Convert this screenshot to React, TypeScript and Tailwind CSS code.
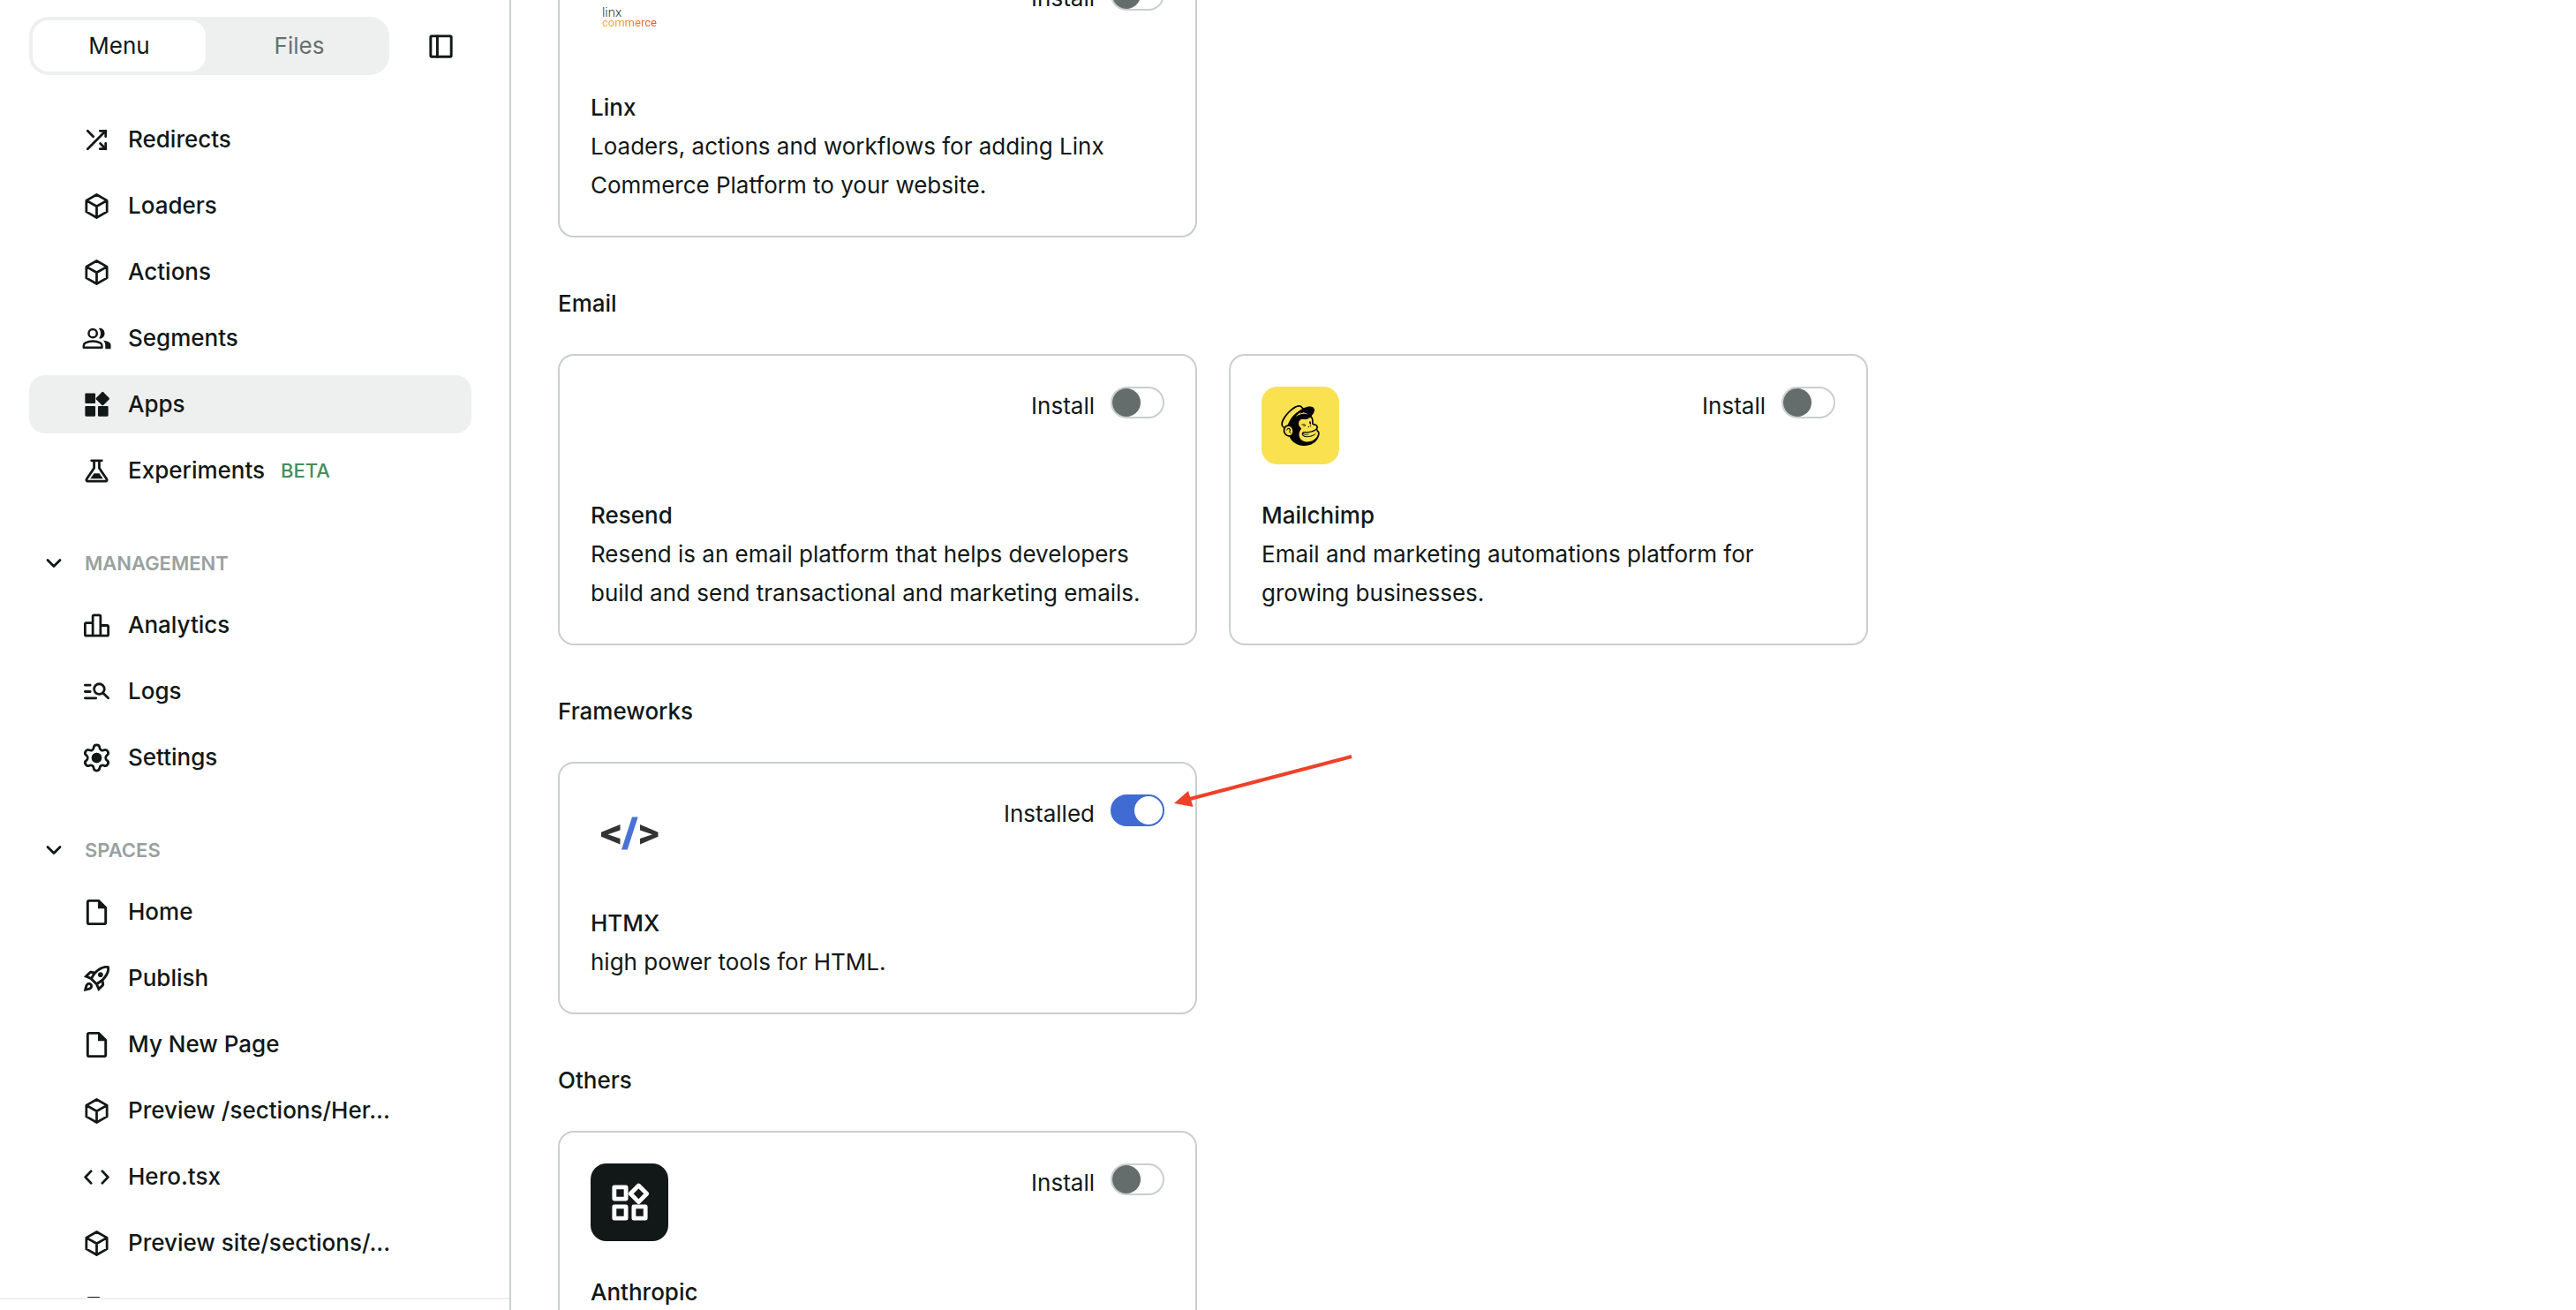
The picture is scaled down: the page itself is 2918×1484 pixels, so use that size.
import { useId, useState } from "react";
import type { ReactNode } from "react";
import { ChevronDown, Settings } from "lucide-react";
import { SiMailchimp } from "react-icons/si";
import { MdOutlineInsertDriveFile, MdOutlineRocketLaunch } from "react-icons/md";

function Icon({ children, className = "size-[35px]" }: { children: ReactNode; className?: string }) {
  return (
    <svg
      viewBox="0 0 24 24"
      fill="none"
      stroke="currentColor"
      strokeWidth="1.9"
      strokeLinecap="round"
      strokeLinejoin="round"
      className={`shrink-0 ${className}`}
      aria-hidden="true"
    >
      {children}
    </svg>
  );
}

const ShuffleIcon = () => (
  <Icon>
    <path d="M5 19 19 5M5 5l4.4 4.4M14.8 14.8 19 19" />
    <path d="M14.6 5H19v4.4M14.6 19H19v-4.4" strokeLinejoin="miter" />
    <path d="M16.5 4.6h2.9v2.9zM16.5 19.4h2.9v-2.9z" fill="currentColor" stroke="none" />
  </Icon>
);

const CubeIcon = () => (
  <Icon>
    <path d="m12 3.1 8 4.5v8.8l-8 4.5-8-4.5V7.6zM4 7.6l8 4.6 8-4.6M12 12.2v8.7" />
  </Icon>
);

const SegmentsIcon = () => (
  <Icon>
    <circle cx="9" cy="8" r="3.2" strokeWidth="1.7" />
    <path d="M1.9 19v-1.4c0-1 .5-1.8 1.4-2.3C5 14.4 6.9 14 9 14s4 .4 5.7 1.3c.9.5 1.4 1.3 1.4 2.3V19z" strokeWidth="1.7" />
    <path d="M13.6 11.9c1-1.1 1.5-2.4 1.5-3.9s-.5-2.8-1.5-3.9c2.6-.6 4.6 1.4 4.6 3.9s-2 4.5-4.6 3.9z" fill="currentColor" stroke="none" />
    <path d="M17 13.3c2.2.3 3.9.9 5 1.7.7.5 1 1.3 1 2.2V20h-4.3v-2.8c0-1.5-.5-2.8-1.7-3.9z" fill="currentColor" stroke="none" />
  </Icon>
);

const AppsIcon = () => (
  <Icon>
    <g fill="currentColor" stroke="none">
      <rect x="3" y="3" width="8" height="8" rx="0.7" />
      <rect x="3" y="13" width="8" height="8" rx="0.7" />
      <rect x="13" y="13" width="8" height="8" rx="0.7" />
      <path d="M16.1 2.2a.8.8 0 0 1 1.1 0l4.5 4.5a.8.8 0 0 1 0 1.1l-4.5 4.5a.8.8 0 0 1-1.1 0l-4.5-4.5a.8.8 0 0 1 0-1.1z" />
    </g>
  </Icon>
);

const FlaskIcon = () => (
  <Icon>
    <path d="M8 4h8M10 4v5.7L4.2 18.4a1 1 0 0 0 .8 1.6h14a1 1 0 0 0 .8-1.6L14 9.7V4" />
    <path d="M7 18h10l-3-4.2h-4z" fill="currentColor" stroke="none" />
  </Icon>
);

const ChartIcon = () => (
  <Icon>
    <path d="M9 20V5a1 1 0 0 1 1-1h4a1 1 0 0 1 1 1v15M9 10H4a1 1 0 0 0-1 1v8a1 1 0 0 0 1 1h16a1 1 0 0 0 1-1v-6a1 1 0 0 0-1-1h-5" />
  </Icon>
);

const LogsIcon = () => (
  <Icon>
    <path d="M3 7h4M3 12h4M3 17h8.5M16.7 12.9 21 17" />
    <circle cx="14" cy="10" r="4" />
  </Icon>
);

const SettingsIcon = () => (
  <Settings className="size-[35px] shrink-0" strokeWidth={1.9} aria-hidden="true">
    <circle cx="12" cy="12" r="3" fill="currentColor" />
  </Settings>
);

const FileIcon = () => <MdOutlineInsertDriveFile className="size-[35px] shrink-0" aria-hidden="true" />;
const RocketIcon = () => <MdOutlineRocketLaunch className="size-[35px] shrink-0" aria-hidden="true" />;

const CodeIcon = () => (
  <Icon>
    <path d="M7.7 7.3 3.2 12l4.5 4.7M16.3 7.3l4.5 4.7-4.5 4.7" />
  </Icon>
);

const PanelIcon = () => (
  <Icon>
    <rect x="4" y="4" width="16" height="16" rx="0.8" strokeWidth="2" />
    <path d="M9.2 4v16" strokeWidth="2" />
  </Icon>
);

type Item = { label?: string; icon: () => ReactNode; active?: boolean; beta?: boolean };

const siteItems: Item[] = [
  { label: "Redirects", icon: ShuffleIcon },
  { label: "Loaders", icon: CubeIcon },
  { label: "Actions", icon: CubeIcon },
  { label: "Segments", icon: SegmentsIcon },
  { label: "Apps", icon: AppsIcon, active: true },
  { label: "Experiments", icon: FlaskIcon, beta: true },
];

const managementItems: Item[] = [
  { label: "Analytics", icon: ChartIcon },
  { label: "Logs", icon: LogsIcon },
  { label: "Settings", icon: SettingsIcon },
];

const spaceItems: Item[] = [
  { label: "Home", icon: FileIcon },
  { label: "Publish", icon: RocketIcon },
  { label: "My New Page", icon: FileIcon },
  { label: "Preview /sections/Her...", icon: CubeIcon },
  { label: "Hero.tsx", icon: CodeIcon },
  { label: "Preview site/sections/...", icon: CubeIcon },
  { icon: FileIcon },
];

function NavList({ items }: { items: Item[] }) {
  return (
    <ul className="flex flex-col gap-[9px]">
      {items.map(({ label, icon: Glyph, active, beta }, index) => (
        <li key={index}>
          <a
            href="#"
            aria-label={label ? undefined : "Page"}
            aria-current={active ? "page" : undefined}
            className={`flex h-[66px] items-center gap-[18px] rounded-[18px] pl-[59px] font-medium ${
              active ? "bg-[#eef0ef]" : ""
            }`}
          >
            <Glyph />
            {label && <span className="whitespace-nowrap">{label}</span>}
            {beta && <span className="text-[22px] text-[#448f5b]">BETA</span>}
          </a>
        </li>
      ))}
    </ul>
  );
}

function NavGroup({ title, items }: { title: string; items: Item[] }) {
  return (
    <section className="mt-[50px]">
      <button type="button" className="mb-[15px] flex h-11 w-full items-center gap-[21px] pl-[14px]">
        <ChevronDown className="size-7 shrink-0" strokeWidth={2.4} aria-hidden="true" />
        <span className="text-[22px] font-semibold text-[#98a19f]">{title}</span>
      </button>
      <NavList items={items} />
    </section>
  );
}

function Sidebar() {
  return (
    <aside className="flex w-[579px] shrink-0 flex-col border-r-2 border-[#c9cfcf]">
      <div className="flex items-center px-[33px] pt-[19px]">
        <div className="flex h-[66px] w-[408px] gap-2 rounded-[22px] bg-[#eef0ef] p-1">
          <button type="button" className="flex-1 rounded-[18px] bg-white">
            Menu
          </button>
          <button type="button" className="flex-1 rounded-[18px] text-[#66706f]">
            Files
          </button>
        </div>
        <button type="button" aria-label="Toggle sidebar" className="ml-[41px]">
          <PanelIcon />
        </button>
      </div>
      <nav className="min-h-0 flex-1 overflow-hidden pt-10 pr-[43px] pl-[33px]">
        <NavList items={siteItems} />
        <NavGroup title="MANAGEMENT" items={managementItems} />
        <NavGroup title="SPACES" items={spaceItems} />
      </nav>
      <div className="h-[14px] shrink-0 border-t-2 border-[#eef0ef]" />
    </aside>
  );
}

function InstallToggle({ installed = false }: { installed?: boolean }) {
  const id = useId();
  const [on, setOn] = useState(installed);
  return (
    <div className="flex items-start gap-[18px]">
      <label htmlFor={id}>{on ? "Installed" : "Install"}</label>
      <input
        id={id}
        type="checkbox"
        checked={on}
        onChange={(e) => setOn(e.target.checked)}
        className="block h-9 w-[61px] appearance-none rounded-full border-2 border-[#c9cfcf] bg-white before:block before:size-8 before:rounded-full before:bg-[#646d6b] checked:border-[#406bd3] checked:bg-[#406bd3] checked:before:ml-[25px] checked:before:bg-white"
      />
    </div>
  );
}

type AppCardProps = {
  name: string;
  description?: string;
  logo?: ReactNode;
  installed?: boolean;
  children?: ReactNode;
};

function AppCard({ name, description, logo, installed, children }: AppCardProps) {
  return (
    <article className="relative rounded-[18px] border-2 border-[#c9cfcf] p-[35px]">
      <div className="flex items-start justify-between">
        <div className="flex size-[88px] items-center justify-center overflow-hidden rounded-[18px]">{logo}</div>
        <InstallToggle installed={installed} />
      </div>
      <h3 className="mt-9 font-medium">{name}</h3>
      {description && <p>{description}</p>}
      {children}
    </article>
  );
}

function Section({ title, children }: { title?: string; children: ReactNode }) {
  return (
    <section>
      {title && <h2 className="mb-[35px] font-medium">{title}</h2>}
      <div className="grid grid-cols-3 gap-9">{children}</div>
    </section>
  );
}

const LinxLogo = () => (
  <div className="w-[62px] font-['Roboto',sans-serif] leading-[11px]">
    <div className="text-[15px] font-light text-[#333]">linx</div>
    <div className="bg-linear-to-r from-[#f5b32a] to-[#ee4b2b] bg-clip-text text-[13px] text-transparent">commerce</div>
  </div>
);

const MailchimpLogo = () => (
  <div className="flex size-full items-center justify-center bg-[#fae150]">
    <SiMailchimp className="size-[46px] text-black" aria-hidden="true" />
  </div>
);

const HtmxLogo = () => (
  <svg viewBox="0 0 88 88" className="size-full" aria-hidden="true">
    <path d="M33.5 34v6.5L19.500 45.3l14 4.7v6.5L12 47.7v-5zM56 34v6.5l14 4.8L56 50v6.5l20.5-8.800v-5z" fill="#333" />
    <path d="M47 25.5h6.7l-12 37H35z" fill="#4a72d6" />
  </svg>
);

const WidgetsLogo = () => (
  <div className="flex size-full items-center justify-center bg-[#111817] text-white">
    <Icon className="size-[53px]">
      <g strokeWidth="2.2">
        <rect x="4" y="4" width="6" height="6" />
        <rect x="4" y="14" width="6" height="6" />
        <rect x="14" y="14" width="6" height="6" />
        <path d="m16.5 3.2 4.2 4.2-4.2 4.2-4.2-4.2z" />
      </g>
    </Icon>
  </div>
);

const Arrow = () => (
  <svg
    viewBox="0 0 206 64"
    className="pointer-events-none absolute -top-[11px] left-full -ml-[26px] h-16 w-[206px]"
    aria-hidden="true"
  >
    <path d="M20 51 203 3" stroke="#ee4128" strokeWidth="4" />
    <path d="M2 56 18 42l5.5 18z" fill="#ee4128" />
  </svg>
);

export default function App() {
  return (
    <div className="flex h-screen overflow-hidden bg-white font-['Inter',sans-serif] text-[26px] leading-[44px] text-[#111817]">
      <Sidebar />
      <main className="min-w-0 flex-1 overflow-hidden pr-[42px] pl-[53px]">
        <div className="-mt-[61px] flex flex-col gap-[53px]">
          <Section>
            <AppCard
              name="Linx"
              description="Loaders, actions and workflows for adding Linx Commerce Platform to your website."
              logo={<LinxLogo />}
            />
          </Section>
          <Section title="Email">
            <AppCard
              name="Resend"
              description="Resend is an email platform that helps developers build and send transactional and marketing emails."
            />
            <AppCard
              name="Mailchimp"
              description="Email and marketing automations platform for growing businesses."
              logo={<MailchimpLogo />}
            />
          </Section>
          <Section title="Frameworks">
            <AppCard name="HTMX" description="high power tools for HTML." logo={<HtmxLogo />} installed>
              <Arrow />
            </AppCard>
          </Section>
          <Section title="Others">
            <AppCard name="Anthropic" logo={<WidgetsLogo />} />
          </Section>
        </div>
      </main>
    </div>
  );
}
